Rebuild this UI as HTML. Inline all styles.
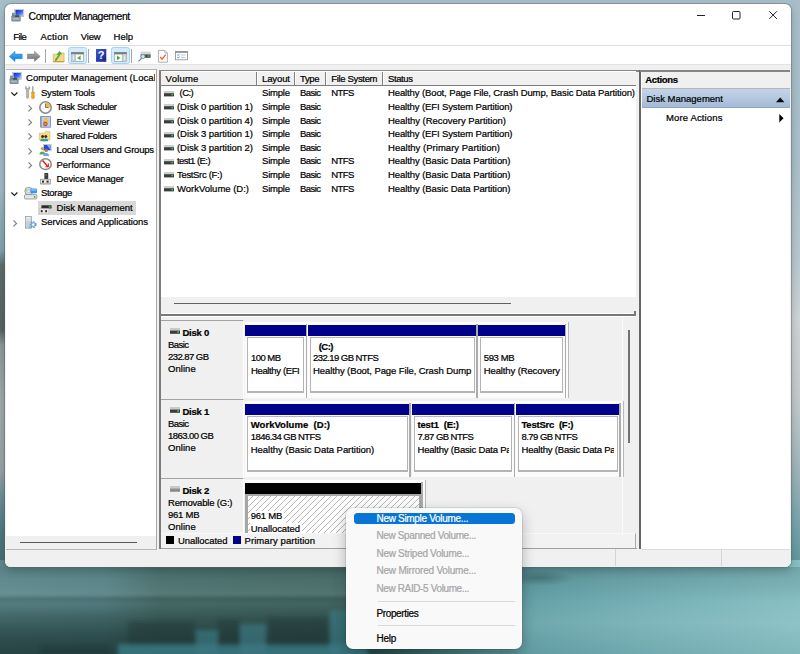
<!DOCTYPE html>
<html><head><meta charset="utf-8"><title>Computer Management</title>
<style>
html,body{margin:0;padding:0;}
body{width:800px;height:654px;overflow:hidden;position:relative;background:#a8bfca;font-family:"Liberation Sans",sans-serif;font-size:10px;line-height:12px;color:#000;}
.a{position:absolute;}
.t{position:absolute;white-space:pre;line-height:12px;display:block;-webkit-text-stroke:0.22px currentColor;}
svg{position:absolute;overflow:visible;}
#bg{left:0;top:0;width:800px;height:654px;background:linear-gradient(to bottom,#a8bfca 0,#aac0cb 160px,#b9c8cf 260px,#cfd4d7 320px,#c4cacc 400px,#9fb6ba 470px,#7aa6ad 520px,#5f979e 567px,#67a4ab 600px,#64a3ac 654px);}
#bgleft{left:0;top:0;width:8px;height:654px;background:linear-gradient(to bottom,#a8bfca 0,#a5bcc7 190px,#8fb0bb 215px,#84a6b0 250px,#5f706f 265px,#566462 330px,#8f9a9b 345px,#a3abad 400px,#9aa5a8 470px,#6f9298 495px,#4f7c82 530px,#436c70 567px);}
#bgbot{left:0;top:560px;width:800px;height:94px;background:linear-gradient(to right,#5f8a8e 0,#5b8589 13%,#4d7370 20%,#496d69 42%,#4e7f83 47%,#5a959b 56%,#68a4aa 68%,#76b0b6 80%,#88c0c4 100%);}
#win{left:5px;top:4px;width:786px;height:563px;background:#fff;border-radius:6px;box-shadow:0 0 0 1px rgba(90,100,105,.4),0 3px 10px rgba(0,0,0,.24);overflow:hidden;}
.pnl{background:#fff;}

</style></head>
<body>
<div class="a" id="bg"></div>
<div class="a" id="bgleft"></div>
<div class="a" id="bgbot"></div>
<!-- bottom-left darkening (tree reflections) -->
<div class="a" style="left:0;top:567px;width:520px;height:87px;background:linear-gradient(to bottom,rgba(0,0,0,.03) 0,rgba(255,255,255,.0) 12px,rgba(255,255,255,.05) 27px,rgba(10,32,30,.2) 32px,rgba(10,32,30,.12) 37px,rgba(10,32,30,.36) 52px,rgba(10,32,30,.56) 70px,rgba(10,32,30,.66) 87px);-webkit-mask-image:linear-gradient(to right,#000 0,#000 66%,transparent 100%);mask-image:linear-gradient(to right,#000 0,#000 66%,transparent 100%);"></div>
<svg style="left:0;top:600px" width="360" height="54" viewBox="0 0 360 54"><defs><filter id="bl" x="-10%" y="-30%" width="120%" height="160%"><feGaussianBlur stdDeviation="2.2"/></filter></defs>
<g filter="url(#bl)">
<rect x="118" y="44" width="250" height="14" fill="#3b7882" opacity=".85"/>
<rect x="196" y="30" width="22" height="26" fill="#3b7882" opacity=".7"/>
<rect x="240" y="24" width="26" height="32" fill="#3b7882" opacity=".7"/>
<rect x="330" y="10" width="32" height="46" fill="#3b7882" opacity=".75"/>
<rect x="128" y="22" width="66" height="23" fill="#1f3a38" opacity=".5"/>
<rect x="218" y="20" width="22" height="26" fill="#1f3a38" opacity=".5"/>
<rect x="268" y="18" width="60" height="28" fill="#1f3a38" opacity=".5"/>
<rect x="40" y="46" width="70" height="10" fill="#162f2e" opacity=".4"/>
</g></svg>

<div class="a" style="left:500px;top:567px;width:300px;height:87px;background:linear-gradient(to bottom,rgba(20,55,60,.20) 0,rgba(20,55,60,.10) 18px,rgba(255,255,255,.0) 36px,rgba(255,255,255,.06) 55px,rgba(20,60,70,.06) 87px);"></div>
<div class="a" style="left:515px;top:570px;width:60px;height:16px;background:radial-gradient(ellipse at 40% 50%,rgba(25,55,55,.35),rgba(25,55,55,0) 70%);"></div>
<div class="a" id="win"></div>
<!-- chrome lines -->
<div class="a" style="left:5px;top:45px;width:786px;height:1px;background:#dedede;"></div>
<div class="a" style="left:5px;top:65px;width:786px;height:502px;background:#f0f0f0;border-radius:0 0 6px 6px;"></div>
<div class="a" style="left:5px;top:64px;width:786px;height:1px;background:#e2e2e2;"></div>
<!-- title buttons -->
<svg style="left:696px;top:7.2px" width="90" height="16" viewBox="0 0 90 16"><g stroke="#222" stroke-width="1" fill="none"><path d="M1 8.5H9"/><rect x="36.5" y="4.5" width="7.5" height="7.5" rx="1"/><path d="M73.3 4.3l7.6 7.6M80.9 4.3l-7.6 7.6"/></g></svg>

<!-- tree panel -->
<div class="a pnl" style="left:6px;top:69px;width:151px;height:480.5px;border-top:1px solid #b4b4b4;border-right:1px solid #a6a6a6;border-bottom:1px solid #b8b8b8;box-sizing:border-box;"></div>
<div class="a" style="left:6px;top:536px;width:150px;height:12.5px;background:#f0f0f0;"></div>
<div class="a" style="left:20px;top:541.5px;width:117px;height:1px;background:#5a5a5a;"></div>
<div class="a" style="left:38px;top:201px;width:98px;height:13.6px;background:#d9d9d9;"></div>

<!-- middle panel -->
<div class="a pnl" style="left:159px;top:70px;width:476.5px;height:479px;"></div>
<div class="a" style="left:159px;top:70px;width:2px;height:479px;background:#7c7c7c;"></div>
<div class="a" style="left:159px;top:70px;width:480px;height:2px;background:#858585;"></div>

<div class="a" style="left:161px;top:548px;width:476px;height:1px;background:#a0a0a0;"></div>
<!-- list header -->
<div class="a" style="left:161px;top:71px;width:475px;height:14px;background:linear-gradient(#fff 0,#fff 1px,#f1f1f1 1.5px,#f0f0f0);border-bottom:1px solid #7c7c7c;"></div>
<div class="a" style="left:256px;top:72px;width:1px;height:13px;background:#808080;box-shadow:1px 0 0 #fff;"></div>
<div class="a" style="left:294px;top:72px;width:1px;height:13px;background:#808080;box-shadow:1px 0 0 #fff;"></div>
<div class="a" style="left:325px;top:72px;width:1px;height:13px;background:#808080;box-shadow:1px 0 0 #fff;"></div>
<div class="a" style="left:382px;top:72px;width:1px;height:13px;background:#808080;box-shadow:1px 0 0 #fff;"></div>
<!-- list h-scroll -->
<div class="a" style="left:161px;top:297px;width:475px;height:18px;background:#f0f0f0;"></div>
<div class="a" style="left:174px;top:303px;width:337px;height:1px;background:#606060;"></div>
<!-- splitter -->
<div class="a" style="left:161px;top:312.5px;width:474px;height:1.5px;background:#fafafa;"></div>
<div class="a" style="left:161px;top:314.2px;width:474.5px;height:1.8px;background:#787878;"></div>
<div class="a" style="left:634.3px;top:311.2px;width:1.3px;height:4.5px;background:#787878;"></div>
<!-- disk area bg -->
<div class="a" style="left:161px;top:317px;width:475px;height:230px;background:#f0f0f0;"></div>
<div class="a" style="left:621.5px;top:317px;width:1px;height:216px;background:#fafafa;"></div>
<div class="a" style="left:628.2px;top:330px;width:1.7px;height:113px;background:#727272;"></div>
<!-- DISKS -->
<div class="a" style="left:161px;top:319.5px;width:82px;height:79px;background:#f0f0f0;border-top:1px solid #a3a3a3;border-right:1px solid #fff;box-sizing:content-box;"></div>
<svg style="left:170px;top:327.7px" width="10" height="6" viewBox="0 0 10 6"><rect x="0" y="0" width="10" height="3" fill="#c9c9c9"/><rect x="0" y="2.6" width="10" height="3.2" fill="#3c3c3c"/><rect x="7.2" y="3.2" width="1.8" height="1.6" fill="#35c64a"/></svg>
<div class="a" style="left:161px;top:398.5px;width:82px;height:79px;background:#f0f0f0;border-top:1px solid #a3a3a3;border-right:1px solid #fff;box-sizing:content-box;"></div>
<svg style="left:170px;top:406.7px" width="10" height="6" viewBox="0 0 10 6"><rect x="0" y="0" width="10" height="3" fill="#c9c9c9"/><rect x="0" y="2.6" width="10" height="3.2" fill="#3c3c3c"/><rect x="7.2" y="3.2" width="1.8" height="1.6" fill="#35c64a"/></svg>
<div class="a" style="left:161px;top:477.5px;width:82px;height:55px;background:#f0f0f0;border-top:1px solid #a3a3a3;border-right:1px solid #fff;box-sizing:content-box;"></div>
<svg style="left:170px;top:485.7px" width="10" height="6" viewBox="0 0 10 6"><rect x="0" y="0" width="10" height="3" fill="#c9c9c9"/><rect x="0" y="2.6" width="10" height="3.2" fill="#8c8c8c"/></svg>
<div class="a" style="left:244.5px;top:321.5px;width:63.0px;height:76.5px;background:#fbfbfb;box-sizing:border-box;"></div>
<div class="a" style="left:305.9px;top:323.5px;width:1.4px;height:74.5px;background:#ababab;"></div>
<div class="a" style="left:244.5px;top:325.0px;width:61.0px;height:10.7px;background:#00008b;"></div>
<div class="a" style="left:246.5px;top:337.2px;width:57.5px;height:56px;border:1.5px solid #b4b4b4;border-bottom-width:2px;box-sizing:border-box;background:#fff;"></div>
<div class="a" style="left:307.5px;top:321.5px;width:170.5px;height:76.5px;background:#fbfbfb;box-sizing:border-box;"></div>
<div class="a" style="left:476.4px;top:323.5px;width:1.4px;height:74.5px;background:#ababab;"></div>
<div class="a" style="left:307.5px;top:325.0px;width:168.5px;height:10.7px;background:#00008b;"></div>
<div class="a" style="left:309.5px;top:337.2px;width:165.0px;height:56px;border:1.5px solid #b4b4b4;border-bottom-width:2px;box-sizing:border-box;background:#fff;"></div>
<div class="a" style="left:478px;top:321.5px;width:91.0px;height:76.5px;background:#fbfbfb;border-right:1px solid #b8b8b8;box-sizing:border-box;"></div>
<div class="a" style="left:564.9px;top:323.5px;width:1.4px;height:74.5px;background:#ababab;"></div>
<div class="a" style="left:478px;top:325.0px;width:86.5px;height:10.7px;background:#00008b;"></div>
<div class="a" style="left:480px;top:337.2px;width:83.0px;height:56px;border:1.5px solid #b4b4b4;border-bottom-width:2px;box-sizing:border-box;background:#fff;"></div>
<div class="a" style="left:244.5px;top:400.5px;width:166.5px;height:76.5px;background:#fbfbfb;box-sizing:border-box;"></div>
<div class="a" style="left:409.4px;top:402.5px;width:1.4px;height:74.5px;background:#ababab;"></div>
<div class="a" style="left:244.5px;top:404.0px;width:164.5px;height:10.7px;background:#00008b;"></div>
<div class="a" style="left:246.5px;top:416.2px;width:161.0px;height:56px;border:1.5px solid #b4b4b4;border-bottom-width:2px;box-sizing:border-box;background:#fff;"></div>
<div class="a" style="left:411.5px;top:400.5px;width:104.0px;height:76.5px;background:#fbfbfb;box-sizing:border-box;"></div>
<div class="a" style="left:513.9px;top:402.5px;width:1.4px;height:74.5px;background:#ababab;"></div>
<div class="a" style="left:411.5px;top:404.0px;width:102.0px;height:10.7px;background:#00008b;"></div>
<div class="a" style="left:413.5px;top:416.2px;width:98.5px;height:56px;border:1.5px solid #b4b4b4;border-bottom-width:2px;box-sizing:border-box;background:#fff;"></div>
<div class="a" style="left:516px;top:400.5px;width:107.5px;height:76.5px;background:#fbfbfb;border-right:1px solid #b8b8b8;box-sizing:border-box;"></div>
<div class="a" style="left:619.4px;top:402.5px;width:1.4px;height:74.5px;background:#ababab;"></div>
<div class="a" style="left:516px;top:404.0px;width:103px;height:10.7px;background:#00008b;"></div>
<div class="a" style="left:518px;top:416.2px;width:99.5px;height:56px;border:1.5px solid #b4b4b4;border-bottom-width:2px;box-sizing:border-box;background:#fff;"></div>
<div class="a" style="left:244.5px;top:479.5px;width:181.0px;height:53.5px;background:#fbfbfb;border-right:1px solid #b8b8b8;box-sizing:border-box;"></div>
<div class="a" style="left:421.4px;top:481.5px;width:1.4px;height:51.5px;background:#ababab;"></div>
<div class="a" style="left:244.5px;top:483.0px;width:176.5px;height:10.7px;background:#000;"></div>
<div class="a" style="left:244.5px;top:493.5px;width:176.5px;height:39.5px;border:2px solid #a6a6a6;border-left-width:3px;border-bottom:none;box-sizing:border-box;background:repeating-linear-gradient(135deg,#fff 0,#fff 3.3px,#b4b4b4 3.3px,#b4b4b4 4.24px);"></div>
<div class="a" style="left:249.5px;top:511.0px;width:34.5px;height:11.5px;background:#fff;"></div>
<div class="a" style="left:249.5px;top:522.5px;width:52.5px;height:11.5px;background:#fff;"></div>
<div class="a" style="left:161px;top:533px;width:474.5px;height:14.5px;background:#f2f2f2;border-top:1px solid #f9f9f9;border-right:1px solid #a8a8a8;box-sizing:border-box;"></div>
<div class="a" style="left:165.5px;top:536.3px;width:8.2px;height:8.2px;background:#000;"></div>
<div class="a" style="left:232.5px;top:536.3px;width:8.2px;height:8.2px;background:#00008b;"></div>
<!-- actions panel -->
<div class="a pnl" style="left:640px;top:70px;width:150px;height:479px;"></div>
<div class="a" style="left:639.4px;top:70px;width:1.7px;height:479px;background:#666;"></div>
<div class="a" style="left:640px;top:70px;width:150px;height:2px;background:#858585;"></div>
<div class="a" style="left:641px;top:548.5px;width:149px;height:1px;background:#dcdcdc;"></div>
<div class="a" style="left:641.5px;top:71.5px;width:148.5px;height:16px;background:#f0f0f0;border-bottom:1px solid #b5b5b5;"></div>
<div class="a" style="left:641.5px;top:88.5px;width:148.5px;height:19.5px;background:linear-gradient(#c3d4e8,#b4c8e0 50%,#a3bbd6);border-bottom:1px solid #8ea6c2;box-sizing:border-box;"></div>
<svg style="left:776px;top:96.5px" width="9" height="6" viewBox="0 0 9 6"><path d="M0 5.2L4.2 0.6L8.4 5.2Z" fill="#000"/></svg>
<svg style="left:778.5px;top:113.8px" width="6" height="9" viewBox="0 0 6 9"><path d="M0.3 0L4.6 4.2L0.3 8.4Z" fill="#000"/></svg>
<!-- status bar -->
<div class="a" style="left:5px;top:549.5px;width:786px;height:17.5px;background:#f0f0f0;border-radius:0 0 6px 6px;"></div>
<div class="a" style="left:615px;top:549px;width:1px;height:17px;background:#d4d4d4;"></div>
<div class="a" style="left:721px;top:549px;width:1px;height:17px;background:#d4d4d4;"></div>
<!-- ICONS -->
<svg style="left:11px;top:8.8px" width="13" height="13" viewBox="0 0 13 13"><defs><linearGradient id="mon" x1="0" y1="0" x2="1" y2="1"><stop offset="0" stop-color="#1020c8"/><stop offset=".55" stop-color="#3d6ae8"/><stop offset="1" stop-color="#a9c8f8"/></linearGradient></defs><rect x="3.6" y="0.2" width="9.2" height="7.6" fill="#d8dde0" stroke="#aab0b4" stroke-width=".5"/><rect x="4.5" y="1" width="7.5" height="5.8" fill="url(#mon)"/><rect x="0.3" y="6.6" width="9.4" height="5.8" rx="1" fill="#7f8e96"/><rect x="1" y="3.8" width="2.6" height="3.4" fill="#6f7a80"/><rect x="1.4" y="4.6" width="1.6" height="1.4" fill="#4fd060"/><rect x="1.6" y="8.8" width="6.6" height="2" fill="#aeb9be"/><path d="M4 6.3h4v1.6h-4z" fill="#39454c"/></svg>
<svg style="left:9px;top:72px" width="13" height="12.6" viewBox="0 0 13 13"><defs><linearGradient id="mon2" x1="0" y1="0" x2="1" y2="1"><stop offset="0" stop-color="#1020c8"/><stop offset=".55" stop-color="#3d6ae8"/><stop offset="1" stop-color="#a9c8f8"/></linearGradient></defs><rect x="3.6" y="0.2" width="9.2" height="7.6" fill="#d8dde0" stroke="#aab0b4" stroke-width=".5"/><rect x="4.5" y="1" width="7.5" height="5.8" fill="url(#mon2)"/><rect x="0.3" y="6.6" width="9.4" height="5.8" rx="1" fill="#7f8e96"/><rect x="1" y="3.8" width="2.6" height="3.4" fill="#6f7a80"/><rect x="1.4" y="4.6" width="1.6" height="1.4" fill="#4fd060"/><rect x="1.6" y="8.8" width="6.6" height="2" fill="#aeb9be"/><path d="M4 6.3h4v1.6h-4z" fill="#39454c"/></svg>
<svg style="left:8.7px;top:50.8px" width="13.5" height="10.8" viewBox="0 0 13.5 10.8"><defs><linearGradient id="ba" x1="0" y1="0" x2="0" y2="1"><stop offset="0" stop-color="#58b4f6"/><stop offset=".5" stop-color="#2f97ec"/><stop offset="1" stop-color="#1c78d4"/></linearGradient></defs><path d="M0.3 5.4L6 0.3V3.1H13.2V7.7H6V10.5Z" fill="url(#ba)" stroke="#1f7fd8" stroke-width=".5"/></svg>
<svg style="left:26.9px;top:50.8px" width="13.5" height="10.8" viewBox="0 0 13.5 10.8"><defs><linearGradient id="fa" x1="0" y1="0" x2="0" y2="1"><stop offset="0" stop-color="#b4b4b4"/><stop offset=".5" stop-color="#8d8d8d"/><stop offset="1" stop-color="#6e6e6e"/></linearGradient></defs><path d="M13.2 5.4L7.5 0.3V3.1H0.3V7.7H7.5V10.5Z" fill="url(#fa)" stroke="#777" stroke-width=".5"/></svg>
<div class="a" style="left:45.2px;top:49px;width:1px;height:14px;background:#a6a6a6;"></div>
<div class="a" style="left:88.4px;top:49px;width:1px;height:14px;background:#a6a6a6;"></div>
<div class="a" style="left:131.3px;top:49px;width:1px;height:14px;background:#a6a6a6;"></div>
<svg style="left:52.7px;top:50.8px" width="11.5" height="11.4" viewBox="0 0 11.5 11.4"><path d="M0.3 3.2h4l1-1.2h5.8v9H0.3z" fill="#f2d98c" stroke="#d0a848" stroke-width=".6"/><path d="M0.6 10.6h10.2" stroke="#c89030" stroke-width=".9"/><path d="M2 9.5C3 6.5 4.8 6 5.6 3.4L4 3.6 6.6 0.2 8.8 3.2 7.3 3.1C6.8 6 4.6 7 3.4 9.6Z" fill="#3cb43c" stroke="#2a8a2a" stroke-width=".3"/></svg>
<div class="a" style="left:68px;top:47px;width:18.5px;height:16.8px;background:#d3ebfb;border:1px solid #9fd5f7;border-radius:2.5px;box-sizing:border-box;"></div>
<div class="a" style="left:111.3px;top:47px;width:18.5px;height:16.8px;background:#d3ebfb;border:1px solid #9fd5f7;border-radius:2.5px;box-sizing:border-box;"></div>
<svg style="left:71.2px;top:52px" width="12.8" height="9.6" viewBox="0 0 12.8 9.6"><rect x="0" y="0" width="12.8" height="9.6" fill="#fff"/><rect x="0" y="0" width="12.8" height="2.4" fill="#7d7d7d"/><rect x=".3" y=".3" width="12.2" height="9" fill="none" stroke="#8a8a8a" stroke-width=".6"/><rect x=".6" y="2.4" width="3.6" height="6.8" fill="#c9d0d6"/><path d="M4.4 2.4v7" stroke="#8a8a8a" stroke-width=".5"/><path d="M9.6 3.6v4.6L6.2 5.9z" fill="#3bb03b"/><rect x="1.9" y="3.6" width=".9" height="4.4" fill="#e9f0f8"/></svg>
<svg style="left:114.4px;top:52px" width="12.8" height="9.6" viewBox="0 0 12.8 9.6"><rect x="0" y="0" width="12.8" height="9.6" fill="#fff"/><rect x="0" y="0" width="12.8" height="2.4" fill="#7d7d7d"/><rect x=".3" y=".3" width="12.2" height="9" fill="none" stroke="#8a8a8a" stroke-width=".6"/><rect x="8.6" y="2.4" width="3.6" height="6.8" fill="#c9d0d6"/><path d="M8.4 2.4v7" stroke="#8a8a8a" stroke-width=".5"/><path d="M3 3.6v4.6L6.4 5.9z" fill="#3bb03b"/><rect x="10" y="3.6" width=".9" height="4.4" fill="#e9f0f8"/></svg>
<svg style="left:96px;top:49.3px" width="10.3" height="12.8" viewBox="0 0 10.3 12.8"><defs><linearGradient id="hp" x1="0" y1="0" x2="1" y2="1"><stop offset="0" stop-color="#3a5cd0"/><stop offset="1" stop-color="#18208c"/></linearGradient></defs><rect x="0" y="0" width="10.3" height="12.8" fill="url(#hp)"/><text x="5.2" y="10.4" font-family="Liberation Sans" font-weight="bold" font-size="11" fill="#fff" text-anchor="middle">?</text></svg>
<svg style="left:138px;top:51.4px" width="12.8" height="10.8" viewBox="0 0 12.8 10.8"><rect x="2.6" y=".6" width="10" height="3" fill="#d4d4d4"/><rect x="2.6" y="3.4" width="10" height="3.4" fill="#454545"/><rect x="9.6" y="4.2" width="1.8" height="1.6" fill="#38c850"/><circle cx="5" cy="5.6" r="2" fill="#cfe4f4" stroke="#7c98b4" stroke-width=".8"/><path d="M3.6 7.2L0.5 10.4" stroke="#6a7f96" stroke-width="1.2"/></svg>
<svg style="left:158px;top:49.6px" width="9.8" height="12.6" viewBox="0 0 9.8 12.6"><path d="M.4 .4h6.4l2.6 2.6v9.2H.4z" fill="#fff" stroke="#9a9a9a" stroke-width=".8"/><path d="M6.8 .4v2.6h2.6" fill="none" stroke="#9a9a9a" stroke-width=".6"/><path d="M2.2 7l1.8 2.2L7.8 4.6" fill="none" stroke="#e8642c" stroke-width="1.3"/></svg>
<svg style="left:175px;top:51.2px" width="12.8" height="9.2" viewBox="0 0 12.8 9.2"><rect x=".4" y=".4" width="12" height="8.4" fill="#fff" stroke="#8a8a8a" stroke-width=".8"/><rect x=".4" y=".4" width="12" height="1.4" fill="#8a8a8a"/><path d="M2.2 3.6l.9.9 1.4-1.6M2.2 6.2l.9.9 1.4-1.6" fill="none" stroke="#2f8fe0" stroke-width=".9"/><path d="M6 4h4.6M6 6.6h4.6" stroke="#b9c4d0" stroke-width=".9"/></svg>
<svg style="left:11.4px;top:91.58px" width="7" height="4.2" viewBox="0 0 7 4.2"><path d="M0.4 0.5L3.4 3.5L6.4 0.5" fill="none" stroke="#222" stroke-width="1.2"/></svg>
<svg style="left:11.4px;top:192.24px" width="7" height="4.2" viewBox="0 0 7 4.2"><path d="M0.4 0.5L3.4 3.5L6.4 0.5" fill="none" stroke="#222" stroke-width="1.2"/></svg>
<svg style="left:28px;top:104.56px" width="4.2" height="6.8" viewBox="0 0 4.2 6.8"><path d="M0.5 0.4L3.5 3.4L0.5 6.4" fill="none" stroke="#808080" stroke-width="1.25"/></svg>
<svg style="left:28px;top:118.94px" width="4.2" height="6.8" viewBox="0 0 4.2 6.8"><path d="M0.5 0.4L3.5 3.4L0.5 6.4" fill="none" stroke="#808080" stroke-width="1.25"/></svg>
<svg style="left:28px;top:133.32px" width="4.2" height="6.8" viewBox="0 0 4.2 6.8"><path d="M0.5 0.4L3.5 3.4L0.5 6.4" fill="none" stroke="#808080" stroke-width="1.25"/></svg>
<svg style="left:28px;top:147.7px" width="4.2" height="6.8" viewBox="0 0 4.2 6.8"><path d="M0.5 0.4L3.5 3.4L0.5 6.4" fill="none" stroke="#808080" stroke-width="1.25"/></svg>
<svg style="left:28px;top:162.07999999999998px" width="4.2" height="6.8" viewBox="0 0 4.2 6.8"><path d="M0.5 0.4L3.5 3.4L0.5 6.4" fill="none" stroke="#808080" stroke-width="1.25"/></svg>
<svg style="left:12.8px;top:219.60000000000002px" width="4.2" height="6.8" viewBox="0 0 4.2 6.8"><path d="M0.5 0.4L3.5 3.4L0.5 6.4" fill="none" stroke="#808080" stroke-width="1.25"/></svg>
<svg style="left:25.4px;top:86.3px" width="10" height="12.8" viewBox="0 0 10 12.8"><path d="M1.2 .3C0 1.4 0 3.4 1.6 4.2V11.6C1.6 12.6 3.6 12.6 3.6 11.6V4.2C5.2 3.4 5.2 1.4 4 .3V2.4H1.2Z" fill="#b8b8b8" stroke="#808080" stroke-width=".5"/><rect x="7.2" y=".2" width="1.3" height="6" fill="#9a9a9a"/><path d="M6.4 6h3v2.2l-.5 .6.5.6v2.4c0 1.2-3 1.2-3 0V9.4l.5-.6-.5-.6z" fill="#f0a818" stroke="#c88408" stroke-width=".4"/></svg>
<svg style="left:39.2px;top:100.9px" width="13" height="13" viewBox="0 0 13 13"><circle cx="6.5" cy="6.5" r="5.7" fill="#fbfbfb" stroke="#8a8a8a" stroke-width="1.6"/><path d="M6.5 6.5V1.6A4.9 4.9 0 0 1 11.4 6.5Z" fill="#f2b64c"/><path d="M6.5 2.6V6.5H9.6" fill="none" stroke="#6a6a6a" stroke-width=".9"/></svg>
<svg style="left:40.4px;top:116.1px" width="10.8" height="11.6" viewBox="0 0 10.8 11.6"><rect x=".9" y=".4" width="9.5" height="10.8" fill="#c3cde6" stroke="#6d82ba" stroke-width=".8"/><rect x=".2" y=".4" width="1.2" height="10.8" fill="#7e8eb8"/><path d="M5.8 1.6L8.4 6H3.2Z" fill="#f6d020" stroke="#c8a000" stroke-width=".3"/><circle cx="5.4" cy="8" r="2" fill="#e04818" stroke="#a03010" stroke-width=".4"/><rect x="4.4" y="7.6" width="2" height=".8" fill="#fff"/></svg>
<svg style="left:39.3px;top:131.4px" width="11.2" height="10.4" viewBox="0 0 11.2 10.4"><path d="M.3 2h5l1.2-1.6H11v8.6H.3z" fill="#f3dc8e" stroke="#d8b050" stroke-width=".5"/><circle cx="3.6" cy="5.4" r="1.5" fill="#3a2a20"/><circle cx="6.8" cy="5.4" r="1.5" fill="#3a2a20"/><path d="M1.2 10.2c0-3.6 4.6-3.6 4.6 0z" fill="#38a860"/><path d="M4.6 10.2c0-3.6 4.6-3.6 4.6 0z" fill="#3890c8"/></svg>
<svg style="left:39.3px;top:144.4px" width="12.4" height="12" viewBox="0 0 12.4 12"><rect x="4.4" y=".3" width="7.8" height="6.6" fill="#dde2e6" stroke="#a8b0b6" stroke-width=".4"/><rect x="5" y=".9" width="6.6" height="5.2" fill="#2848d8"/><path d="M8 .9h3.6v5.2z" fill="#88b0f4"/><circle cx="3.4" cy="4.6" r="1.7" fill="#c8a070"/><circle cx="7.2" cy="6.4" r="1.7" fill="#b07848"/><path d="M.4 10.6c0-4.2 5.8-4.2 5.8 0z" fill="#58a858"/><path d="M4.4 12c0-4 5.8-4 5.8 0z" fill="#6aa8dc"/></svg>
<svg style="left:39.2px;top:158.2px" width="13" height="12.4" viewBox="0 0 13 12.4"><ellipse cx="6.5" cy="6.2" rx="5.7" ry="5.4" fill="#fbfbfb" stroke="#8a8a8a" stroke-width="1.5"/><path d="M3.6 2.6L9 8.8" stroke="#e02010" stroke-width="1.5"/><path d="M9.4 5.4v3.4h-3" fill="none" stroke="#e02010" stroke-width="1"/></svg>
<svg style="left:40px;top:173.1px" width="10.8" height="12" viewBox="0 0 10.8 12"><rect x="4.4" y="0" width="3.8" height="6" fill="#3a3a3a"/><rect x="5.6" y="1.4" width="1" height="1.4" fill="#40c040"/><rect x=".4" y="6.2" width="10" height="4.6" fill="#e4e4e4" stroke="#8a8a8a" stroke-width=".7"/><rect x="2" y="7.6" width="2" height="2" fill="#2a2a2a"/><rect x="6.6" y="7.6" width="2" height="2" fill="#2a2a2a"/><rect x=".4" y="11" width="10" height=".9" fill="#c8c8c8"/></svg>
<svg style="left:23.9px;top:186.9px" width="13.4" height="12.6" viewBox="0 0 13.4 12.6"><circle cx="4.8" cy="4.2" r="4" fill="#d8d8d8" stroke="#8c8c8c" stroke-width=".7"/><circle cx="4.8" cy="4.2" r="1.3" fill="#f8f8f8" stroke="#a0a0a0" stroke-width=".4"/><rect x="1.2" y="2.6" width="1.2" height="1.2" fill="#50c050"/><rect x="6.4" y="1.6" width="6.6" height="4.6" rx="1" fill="#3a98e8"/><rect x="7.2" y="2.2" width="5" height="1.4" fill="#8cc8f8"/><rect x=".5" y="7.6" width="12.4" height="4.4" rx="1" fill="#e6e6e6" stroke="#808080" stroke-width=".7"/><rect x="9.8" y="9" width="1.6" height="1.8" fill="#38b838"/></svg>
<svg style="left:39.2px;top:204.6px" width="12.8" height="9.2" viewBox="0 0 12.8 9.2"><rect x="2.4" y=".2" width="10.2" height="3.4" rx=".6" fill="#2e2e2e"/><rect x="9.8" y="1.2" width="1.8" height="1.4" fill="#40d050"/><rect x=".3" y="3.8" width="9.6" height="5" fill="#e9e9e9" stroke="#b8b8b8" stroke-width=".5"/><rect x="1.8" y="5.2" width="1.8" height="2" fill="#222"/><rect x="6.2" y="5.2" width="1.8" height="2" fill="#222"/></svg>
<svg style="left:25.4px;top:215.9px" width="11.6" height="12.8" viewBox="0 0 11.6 12.8"><rect x=".4" y=".4" width="6" height="11.8" fill="#c9cfd4" stroke="#8a9298" stroke-width=".6"/><rect x="1.2" y="1.4" width="4.4" height="1.3" fill="#f4f6f8"/><rect x="1.2" y="3.6" width="4.4" height="1" fill="#eef0f2"/><rect x="4.2" y="10.4" width="1.4" height="1.2" fill="#40c860"/><circle cx="8.2" cy="8.6" r="2.5" fill="none" stroke="#5f98d8" stroke-width="1.9" stroke-dasharray="1.5 .8"/><circle cx="8.2" cy="8.6" r="1.7" fill="none" stroke="#7cb0e8" stroke-width=".9"/></svg>
<svg style="left:163.6px;top:90.8px" width="10" height="5.6" viewBox="0 0 10 5.6"><rect x="0" y="0" width="10" height="2.6" fill="#cfcfcf"/><rect x="0" y="2.2" width="10" height="3.2" fill="#3c3c3c"/><rect x="7.4" y="2.9" width="1.7" height="1.5" fill="#35c64a"/></svg>
<svg style="left:163.6px;top:104.39999999999999px" width="10" height="5.6" viewBox="0 0 10 5.6"><rect x="0" y="0" width="10" height="2.6" fill="#cfcfcf"/><rect x="0" y="2.2" width="10" height="3.2" fill="#3c3c3c"/><rect x="7.4" y="2.9" width="1.7" height="1.5" fill="#35c64a"/></svg>
<svg style="left:163.6px;top:118.0px" width="10" height="5.6" viewBox="0 0 10 5.6"><rect x="0" y="0" width="10" height="2.6" fill="#cfcfcf"/><rect x="0" y="2.2" width="10" height="3.2" fill="#3c3c3c"/><rect x="7.4" y="2.9" width="1.7" height="1.5" fill="#35c64a"/></svg>
<svg style="left:163.6px;top:131.60000000000002px" width="10" height="5.6" viewBox="0 0 10 5.6"><rect x="0" y="0" width="10" height="2.6" fill="#cfcfcf"/><rect x="0" y="2.2" width="10" height="3.2" fill="#3c3c3c"/><rect x="7.4" y="2.9" width="1.7" height="1.5" fill="#35c64a"/></svg>
<svg style="left:163.6px;top:145.20000000000002px" width="10" height="5.6" viewBox="0 0 10 5.6"><rect x="0" y="0" width="10" height="2.6" fill="#cfcfcf"/><rect x="0" y="2.2" width="10" height="3.2" fill="#3c3c3c"/><rect x="7.4" y="2.9" width="1.7" height="1.5" fill="#35c64a"/></svg>
<svg style="left:163.6px;top:158.8px" width="10" height="5.6" viewBox="0 0 10 5.6"><rect x="0" y="0" width="10" height="2.6" fill="#cfcfcf"/><rect x="0" y="2.2" width="10" height="3.2" fill="#3c3c3c"/><rect x="7.4" y="2.9" width="1.7" height="1.5" fill="#35c64a"/></svg>
<svg style="left:163.6px;top:172.4px" width="10" height="5.6" viewBox="0 0 10 5.6"><rect x="0" y="0" width="10" height="2.6" fill="#cfcfcf"/><rect x="0" y="2.2" width="10" height="3.2" fill="#3c3c3c"/><rect x="7.4" y="2.9" width="1.7" height="1.5" fill="#35c64a"/></svg>
<svg style="left:163.6px;top:186.0px" width="10" height="5.6" viewBox="0 0 10 5.6"><rect x="0" y="0" width="10" height="2.6" fill="#cfcfcf"/><rect x="0" y="2.2" width="10" height="3.2" fill="#3c3c3c"/><rect x="7.4" y="2.9" width="1.7" height="1.5" fill="#35c64a"/></svg>

<!-- text layer -->
<span class="t" style="left:28.60px;top:10.62px;font-size:10.4px;letter-spacing:-0.421px;">Computer Management</span>
<span class="t" style="left:13.20px;top:31.33px;font-size:9.5px;letter-spacing:-0.550px;">File</span>
<span class="t" style="left:40.40px;top:31.33px;font-size:9.5px;letter-spacing:0.239px;">Action</span>
<span class="t" style="left:80.80px;top:31.33px;font-size:9.5px;letter-spacing:-0.207px;">View</span>
<span class="t" style="left:113.60px;top:31.33px;font-size:9.5px;letter-spacing:-0.049px;">Help</span>
<span class="t" style="left:26.00px;top:72.43px;font-size:9.5px;letter-spacing:0.058px;width:129px;overflow:hidden;">Computer Management (Local)</span>
<span class="t" style="left:41.00px;top:86.81px;font-size:9.5px;letter-spacing:-0.212px;">System Tools</span>
<span class="t" style="left:56.60px;top:101.19px;font-size:9.5px;letter-spacing:-0.350px;">Task Scheduler</span>
<span class="t" style="left:56.60px;top:115.57px;font-size:9.5px;letter-spacing:-0.274px;">Event Viewer</span>
<span class="t" style="left:56.60px;top:129.95px;font-size:9.5px;letter-spacing:-0.350px;">Shared Folders</span>
<span class="t" style="left:56.60px;top:144.33px;font-size:9.5px;letter-spacing:-0.241px;">Local Users and Groups</span>
<span class="t" style="left:56.60px;top:158.71px;font-size:9.5px;letter-spacing:-0.059px;">Performance</span>
<span class="t" style="left:56.60px;top:173.09px;font-size:9.5px;letter-spacing:-0.136px;">Device Manager</span>
<span class="t" style="left:41.00px;top:187.47px;font-size:9.5px;letter-spacing:-0.314px;">Storage</span>
<span class="t" style="left:56.60px;top:201.85px;font-size:9.5px;letter-spacing:-0.040px;">Disk Management</span>
<span class="t" style="left:41.00px;top:216.23px;font-size:9.5px;letter-spacing:-0.053px;">Services and Applications</span>
<span class="t" style="left:165.60px;top:73.23px;font-size:9.5px;letter-spacing:0.222px;">Volume</span>
<span class="t" style="left:262.00px;top:73.23px;font-size:9.5px;letter-spacing:-0.106px;">Layout</span>
<span class="t" style="left:300.00px;top:73.23px;font-size:9.5px;letter-spacing:-0.370px;">Type</span>
<span class="t" style="left:331.25px;top:73.23px;font-size:9.5px;letter-spacing:-0.338px;">File System</span>
<span class="t" style="left:388.00px;top:73.23px;font-size:9.5px;letter-spacing:-0.388px;">Status</span>
<span class="t" style="left:179.60px;top:87.33px;font-size:9.5px;letter-spacing:-0.550px;">(C:)</span>
<span class="t" style="left:262.00px;top:87.33px;font-size:9.5px;letter-spacing:-0.209px;">Simple</span>
<span class="t" style="left:300.00px;top:87.33px;font-size:9.5px;letter-spacing:-0.550px;">Basic</span>
<span class="t" style="left:331.25px;top:87.33px;font-size:9.5px;letter-spacing:-0.550px;">NTFS</span>
<span class="t" style="left:388.00px;top:87.33px;font-size:9.5px;letter-spacing:-0.111px;">Healthy (Boot, Page File, Crash Dump, Basic Data Partition)</span>
<span class="t" style="left:177.00px;top:100.93px;font-size:9.5px;letter-spacing:-0.058px;">(Disk 0 partition 1)</span>
<span class="t" style="left:262.00px;top:100.93px;font-size:9.5px;letter-spacing:-0.209px;">Simple</span>
<span class="t" style="left:300.00px;top:100.93px;font-size:9.5px;letter-spacing:-0.550px;">Basic</span>
<span class="t" style="left:388.00px;top:100.93px;font-size:9.5px;letter-spacing:-0.113px;">Healthy (EFI System Partition)</span>
<span class="t" style="left:177.00px;top:114.53px;font-size:9.5px;letter-spacing:-0.058px;">(Disk 0 partition 4)</span>
<span class="t" style="left:262.00px;top:114.53px;font-size:9.5px;letter-spacing:-0.209px;">Simple</span>
<span class="t" style="left:300.00px;top:114.53px;font-size:9.5px;letter-spacing:-0.550px;">Basic</span>
<span class="t" style="left:388.00px;top:114.53px;font-size:9.5px;letter-spacing:-0.030px;">Healthy (Recovery Partition)</span>
<span class="t" style="left:177.00px;top:128.13px;font-size:9.5px;letter-spacing:-0.058px;">(Disk 3 partition 1)</span>
<span class="t" style="left:262.00px;top:128.13px;font-size:9.5px;letter-spacing:-0.209px;">Simple</span>
<span class="t" style="left:300.00px;top:128.13px;font-size:9.5px;letter-spacing:-0.550px;">Basic</span>
<span class="t" style="left:388.00px;top:128.13px;font-size:9.5px;letter-spacing:-0.113px;">Healthy (EFI System Partition)</span>
<span class="t" style="left:177.00px;top:141.73px;font-size:9.5px;letter-spacing:-0.058px;">(Disk 3 partition 2)</span>
<span class="t" style="left:262.00px;top:141.73px;font-size:9.5px;letter-spacing:-0.209px;">Simple</span>
<span class="t" style="left:300.00px;top:141.73px;font-size:9.5px;letter-spacing:-0.550px;">Basic</span>
<span class="t" style="left:388.00px;top:141.73px;font-size:9.5px;letter-spacing:0.023px;">Healthy (Primary Partition)</span>
<span class="t" style="left:177.00px;top:155.33px;font-size:9.5px;letter-spacing:-0.550px;">test1 (E:)</span>
<span class="t" style="left:262.00px;top:155.33px;font-size:9.5px;letter-spacing:-0.209px;">Simple</span>
<span class="t" style="left:300.00px;top:155.33px;font-size:9.5px;letter-spacing:-0.550px;">Basic</span>
<span class="t" style="left:331.25px;top:155.33px;font-size:9.5px;letter-spacing:-0.550px;">NTFS</span>
<span class="t" style="left:388.00px;top:155.33px;font-size:9.5px;letter-spacing:-0.073px;">Healthy (Basic Data Partition)</span>
<span class="t" style="left:177.00px;top:168.93px;font-size:9.5px;letter-spacing:-0.327px;">TestSrc (F:)</span>
<span class="t" style="left:262.00px;top:168.93px;font-size:9.5px;letter-spacing:-0.209px;">Simple</span>
<span class="t" style="left:300.00px;top:168.93px;font-size:9.5px;letter-spacing:-0.550px;">Basic</span>
<span class="t" style="left:331.25px;top:168.93px;font-size:9.5px;letter-spacing:-0.550px;">NTFS</span>
<span class="t" style="left:388.00px;top:168.93px;font-size:9.5px;letter-spacing:-0.073px;">Healthy (Basic Data Partition)</span>
<span class="t" style="left:177.00px;top:182.53px;font-size:9.5px;letter-spacing:-0.011px;">WorkVolume (D:)</span>
<span class="t" style="left:262.00px;top:182.53px;font-size:9.5px;letter-spacing:-0.209px;">Simple</span>
<span class="t" style="left:300.00px;top:182.53px;font-size:9.5px;letter-spacing:-0.550px;">Basic</span>
<span class="t" style="left:331.25px;top:182.53px;font-size:9.5px;letter-spacing:-0.550px;">NTFS</span>
<span class="t" style="left:388.00px;top:182.53px;font-size:9.5px;letter-spacing:-0.073px;">Healthy (Basic Data Partition)</span>
<span class="t" style="left:645.20px;top:73.73px;font-size:9.5px;font-weight:bold;letter-spacing:-0.332px;">Actions</span>
<span class="t" style="left:646.50px;top:93.33px;font-size:9.5px;letter-spacing:-0.004px;">Disk Management</span>
<span class="t" style="left:666.00px;top:111.93px;font-size:9.5px;letter-spacing:0.134px;">More Actions</span>
<span class="t" style="left:182.50px;top:326.73px;font-size:9.5px;font-weight:bold;letter-spacing:-0.250px;">Disk 0</span>
<span class="t" style="left:168.00px;top:338.73px;font-size:9.5px;letter-spacing:-0.550px;">Basic</span>
<span class="t" style="left:168.00px;top:350.73px;font-size:9.5px;letter-spacing:-0.550px;">232.87 GB</span>
<span class="t" style="left:168.00px;top:362.73px;font-size:9.5px;letter-spacing:0.056px;">Online</span>
<span class="t" style="left:182.50px;top:405.73px;font-size:9.5px;font-weight:bold;letter-spacing:-0.250px;">Disk 1</span>
<span class="t" style="left:168.00px;top:417.73px;font-size:9.5px;letter-spacing:-0.550px;">Basic</span>
<span class="t" style="left:168.00px;top:429.73px;font-size:9.5px;letter-spacing:-0.550px;">1863.00 GB</span>
<span class="t" style="left:168.00px;top:441.73px;font-size:9.5px;letter-spacing:0.056px;">Online</span>
<span class="t" style="left:182.50px;top:484.73px;font-size:9.5px;font-weight:bold;letter-spacing:-0.250px;">Disk 2</span>
<span class="t" style="left:168.00px;top:496.73px;font-size:9.5px;letter-spacing:-0.197px;">Removable (G:)</span>
<span class="t" style="left:168.00px;top:508.73px;font-size:9.5px;letter-spacing:-0.250px;">961 MB</span>
<span class="t" style="left:168.00px;top:520.73px;font-size:9.5px;letter-spacing:0.056px;">Online</span>
<span class="t" style="left:251.00px;top:352.13px;font-size:9.5px;letter-spacing:-0.550px;">100 MB</span>
<span class="t" style="left:251.00px;top:364.63px;font-size:9.5px;letter-spacing:-0.368px;">Healthy (EFI</span>
<span class="t" style="left:318.75px;top:340.63px;font-size:9.5px;font-weight:bold;letter-spacing:-0.550px;">(C:)</span>
<span class="t" style="left:313.00px;top:352.13px;font-size:9.5px;letter-spacing:-0.550px;">232.19 GB NTFS</span>
<span class="t" style="left:313.00px;top:364.63px;font-size:9.5px;letter-spacing:-0.095px;">Healthy (Boot, Page File, Crash Dump</span>
<span class="t" style="left:483.75px;top:352.13px;font-size:9.5px;letter-spacing:-0.400px;">593 MB</span>
<span class="t" style="left:483.75px;top:364.63px;font-size:9.5px;letter-spacing:-0.118px;">Healthy (Recovery</span>
<span class="t" style="left:250.75px;top:419.13px;font-size:9.5px;font-weight:bold;letter-spacing:0.028px;">WorkVolume  (D:)</span>
<span class="t" style="left:250.75px;top:431.13px;font-size:9.5px;letter-spacing:-0.550px;">1846.34 GB NTFS</span>
<span class="t" style="left:250.75px;top:443.63px;font-size:9.5px;letter-spacing:-0.038px;">Healthy (Basic Data Partition)</span>
<span class="t" style="left:417.50px;top:419.13px;font-size:9.5px;font-weight:bold;letter-spacing:-0.180px;">test1  (E:)</span>
<span class="t" style="left:417.50px;top:431.13px;font-size:9.5px;letter-spacing:-0.550px;">7.87 GB NTFS</span>
<span class="t" style="left:417.50px;top:443.63px;font-size:9.5px;letter-spacing:-0.193px;width:91.5px;overflow:hidden;">Healthy (Basic Data Partition)</span>
<span class="t" style="left:521.50px;top:419.13px;font-size:9.5px;font-weight:bold;letter-spacing:-0.227px;">TestSrc  (F:)</span>
<span class="t" style="left:521.50px;top:431.13px;font-size:9.5px;letter-spacing:-0.550px;">8.79 GB NTFS</span>
<span class="t" style="left:521.50px;top:443.63px;font-size:9.5px;letter-spacing:-0.193px;width:92.5px;overflow:hidden;">Healthy (Basic Data Partition)</span>
<span class="t" style="left:250.75px;top:510.38px;font-size:9.5px;letter-spacing:-0.250px;">961 MB</span>
<span class="t" style="left:250.75px;top:522.88px;font-size:9.5px;letter-spacing:-0.092px;">Unallocated</span>
<span class="t" style="left:178.00px;top:535.48px;font-size:9.5px;letter-spacing:-0.067px;">Unallocated</span>
<span class="t" style="left:244.50px;top:535.48px;font-size:9.5px;letter-spacing:0.083px;">Primary partition</span>
<!-- context menu -->
<div class="a" style="left:346px;top:508px;width:176px;height:141px;background:#f9f9f9;border-radius:7px;box-shadow:0 0 0 1px rgba(0,0,0,.08),0 5px 14px rgba(0,0,0,.28);"></div>
<div class="a" style="left:354px;top:512.6px;width:161px;height:11.4px;background:#0874d6;border-radius:3.5px;"></div>
<div class="a" style="left:378px;top:601px;width:137px;height:1px;background:#d9d9d9;"></div>
<div class="a" style="left:378px;top:625px;width:137px;height:1px;background:#d9d9d9;"></div>

<span class="t" style="left:376.50px;top:512.95px;font-size:10px;color:#fff;letter-spacing:-0.307px;">New Simple Volume...</span>
<span class="t" style="left:376.50px;top:530.45px;font-size:10px;color:#a6a6a6;letter-spacing:-0.370px;">New Spanned Volume...</span>
<span class="t" style="left:376.50px;top:547.85px;font-size:10px;color:#a6a6a6;letter-spacing:-0.302px;">New Striped Volume...</span>
<span class="t" style="left:376.50px;top:565.35px;font-size:10px;color:#a6a6a6;letter-spacing:-0.218px;">New Mirrored Volume...</span>
<span class="t" style="left:376.50px;top:582.75px;font-size:10px;color:#a6a6a6;letter-spacing:-0.376px;">New RAID-5 Volume...</span>
<span class="t" style="left:376.50px;top:607.55px;font-size:10px;letter-spacing:-0.375px;">Properties</span>
<span class="t" style="left:376.50px;top:632.55px;font-size:10px;letter-spacing:-0.226px;">Help</span>
</body></html>
